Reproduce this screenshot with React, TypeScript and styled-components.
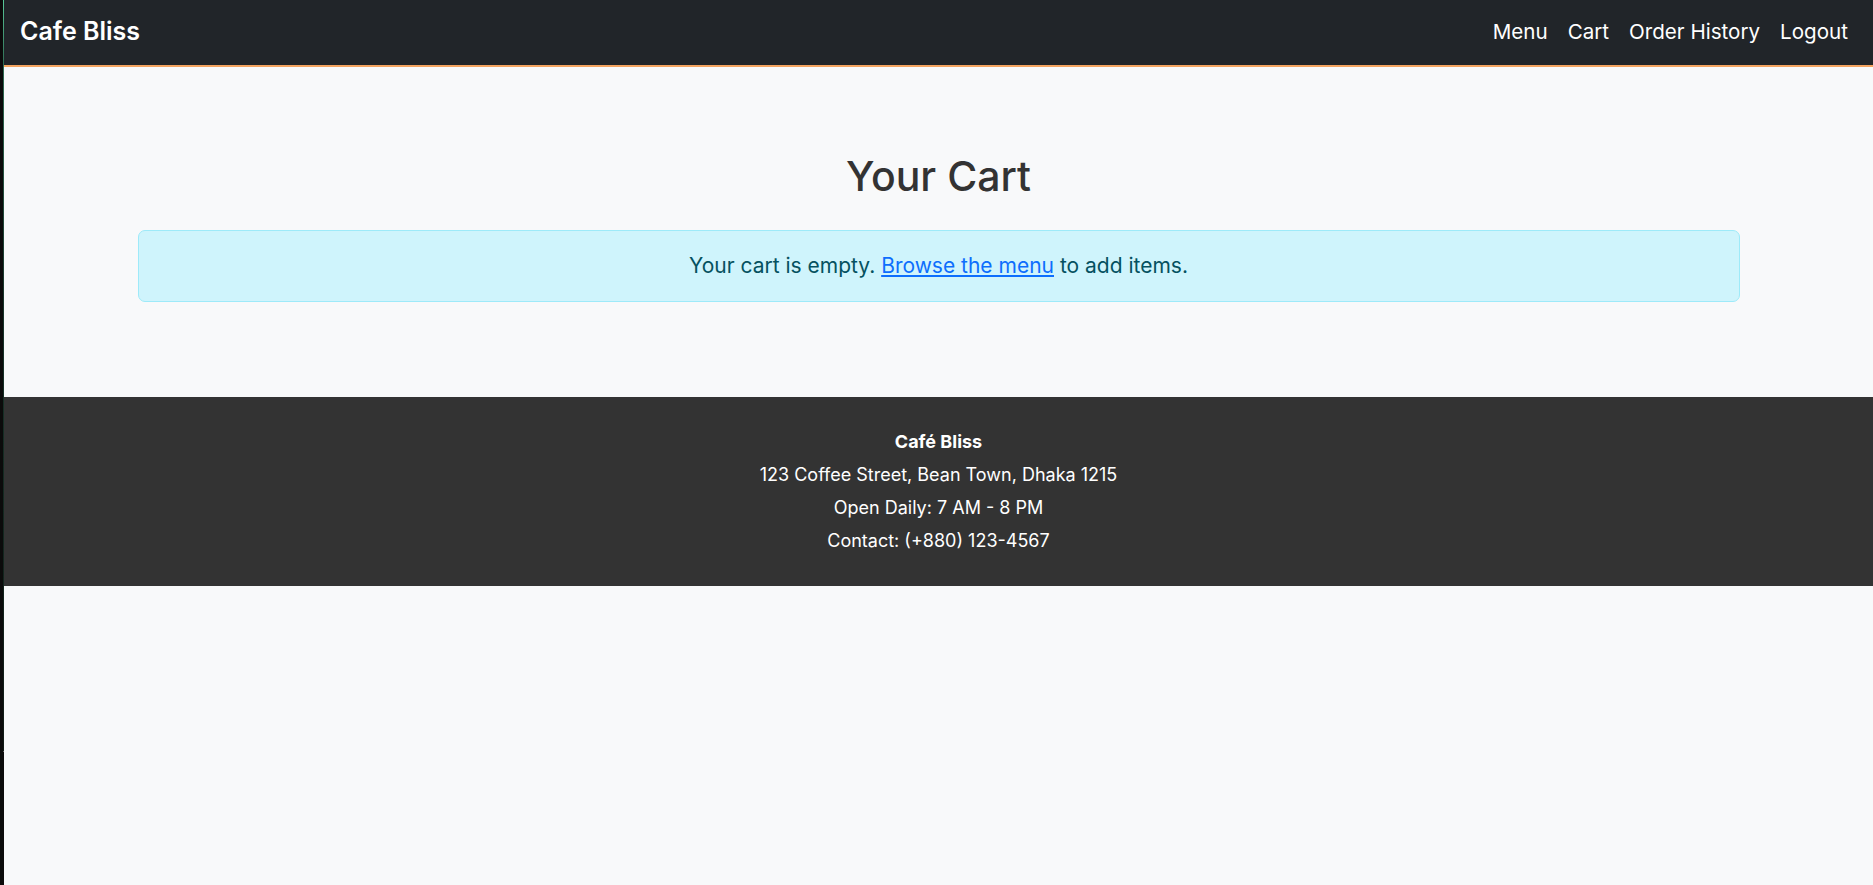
import React from "react";
import styled, { createGlobalStyle } from "styled-components";

const FONT = `"Inter", "Noto Sans", sans-serif`;

const GlobalStyle = createGlobalStyle`
  html, body { margin: 0; padding: 0; }
  body {
    background: #f8f9fa;
    font-family: ${FONT};
    color: #333;
  }
`;

const Frame = styled.div`
  display: flex;
  min-height: 100vh;
`;

const EdgeStrip = styled.div`
  width: 4px;
  flex: none;
  background:
    linear-gradient(to bottom, #58c99a 0, #2f6b52 65px, #17352a 300px, #0f1a15 751px, #6a6a6a 751px, #6a6a6a 752px, #0b0b0b 752px) right / 1px 100% no-repeat,
    #0b0b0b;
`;

const Page = styled.div`
  flex: 1;
  min-width: 0;
  display: flex;
  flex-direction: column;
`;

const NavBar = styled.nav`
  box-sizing: content-box;
  height: 62px;
  padding: 0 15px 3px 16px;
  background: #212529;
  border-bottom: 2px solid #f4a460;
  display: flex;
  align-items: center;
  justify-content: space-between;
`;

const Brand = styled.a`
  color: #fff;
  font-size: 25px;
  font-weight: 600;
  text-decoration: none;
`;

const NavLinks = styled.div`
  display: flex;
  align-items: center;
`;

const NavLink = styled.a`
  color: #fff;
  font-size: 20.6px;
  padding: 0 10px;
  text-decoration: none;
`;

const Main = styled.main`
  padding: 85px 0 95px;
`;

const Title = styled.h2`
  margin: 0 0 30px;
  text-align: center;
  font-size: 41px;
  line-height: 48px;
  font-weight: 500;
  color: #333;
`;

const Alert = styled.div`
  width: 1602px;
  margin: 0 auto;
  box-sizing: border-box;
  padding: 20px;
  border: 1px solid #9eeaf9;
  border-radius: 7px;
  background: #cff4fc;
  color: #055160;
  text-align: center;
  font-size: 21px;
  line-height: 30px;
`;

const AlertLink = styled.a`
  color: #0d6efd;
  text-decoration: underline;
`;

const Footer = styled.footer`
  background: #333;
  color: #fff;
  text-align: center;
  padding: 28px 0 29px;
`;

const FooterLine = styled.p<{ $bold?: boolean }>`
  margin: 0;
  font-size: 18px;
  line-height: 33px;
  font-weight: ${(p) => (p.$bold ? 700 : 400)};
`;

export default function App() {
  return (
    <>
      <GlobalStyle />
      <Frame>
        <EdgeStrip />
        <Page>
          <NavBar>
            <Brand href="#">Cafe Bliss</Brand>
            <NavLinks>
              <NavLink href="#">Menu</NavLink>
              <NavLink href="#">Cart</NavLink>
              <NavLink href="#">Order History</NavLink>
              <NavLink href="#">Logout</NavLink>
            </NavLinks>
          </NavBar>
          <Main>
            <Title>Your Cart</Title>
            <Alert>
              Your cart is empty. <AlertLink href="#">Browse the menu</AlertLink> to add items.
            </Alert>
          </Main>
          <Footer>
            <FooterLine $bold>Café Bliss</FooterLine>
            <FooterLine>123 Coffee Street, Bean Town, Dhaka 1215</FooterLine>
            <FooterLine>Open Daily: 7 AM - 8 PM</FooterLine>
            <FooterLine>Contact: (+880) 123-4567</FooterLine>
          </Footer>
        </Page>
      </Frame>
    </>
  );
}
